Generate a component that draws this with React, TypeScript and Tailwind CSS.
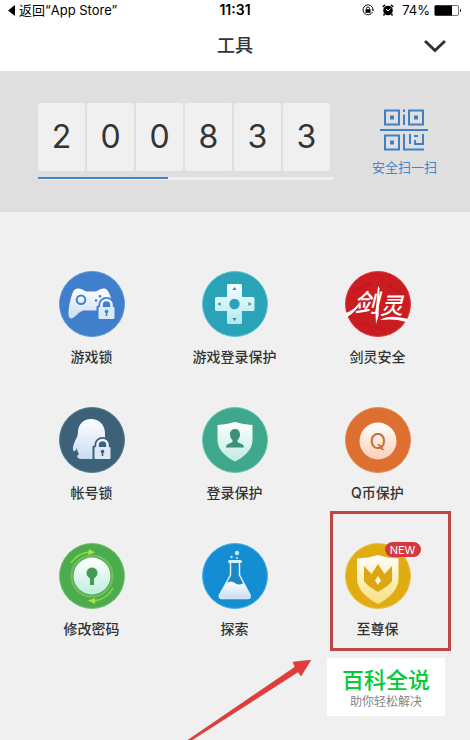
import type { ReactNode } from "react";

function LockBadge({ x, y, stroke }: { x: number; y: number; stroke: string }) {
  return (
    <g transform={`translate(${x} ${y})`}>
      <path
        d="M0 9H2V7A6.500 6.500 0 0 1 15 7V9H17V21H0Z"
        fill={stroke}
        stroke={stroke}
        strokeWidth="3"
        strokeLinejoin="round"
      />
      <path d="M3.500 10V7A5 5 0 0 1 13.500 7V10" fill="none" stroke="#eef5fc" strokeWidth="2.500" />
      <rect x="0.500" y="9" width="16" height="12" rx="1" fill="#dce9f6" />
      <circle cx="8.500" cy="13.500" r="1.800" fill={stroke} />
      <path d="M8.500 14V18" stroke={stroke} strokeWidth="1.600" />
    </g>
  );
}

function Disc({ fill, edge, children }: { fill: string; edge: string; children: ReactNode }) {
  return (
    <svg viewBox="0 0 66 66" className="size-[66px]" aria-hidden="true">
      <defs>
        <linearGradient id="pale" x1="0" y1="0" x2="0" y2="1">
          <stop offset="0" stopColor="#ffffff" />
          <stop offset="1" stopColor="#c9dcf0" />
        </linearGradient>
        <linearGradient id="mint" x1="0" y1="0" x2="0" y2="1">
          <stop offset="0" stopColor="#ffffff" />
          <stop offset="1" stopColor="#c0ecdf" />
        </linearGradient>
        <linearGradient id="aqua" x1="0" y1="0" x2="0" y2="1">
          <stop offset="0" stopColor="#f4ffff" />
          <stop offset="1" stopColor="#b4e6ee" />
        </linearGradient>
        <linearGradient id="peach" x1="0" y1="0" x2="0" y2="1">
          <stop offset="0" stopColor="#ffffff" />
          <stop offset="1" stopColor="#f9cfb4" />
        </linearGradient>
        <linearGradient id="cream" x1="0" y1="0" x2="0" y2="1">
          <stop offset="0" stopColor="#ffffff" />
          <stop offset="1" stopColor="#f8e07c" />
        </linearGradient>
      </defs>
      <circle cx="33" cy="33" r="32.500" fill={fill} stroke={edge} />
      {children}
    </svg>
  );
}

const GameLockIcon = () => (
  <Disc fill="#3f7fcb" edge="#5a96da">
    <path
      d="M17 18C20 17 23 18 26 20Q27 20.500 29 20.500H35Q37 20.500 38 20C41 18 44 17 47 18C50 20 52 26 54 34V48H47C44 44 42 40 39 39.500H25C21 40 18 44 14 47C11 48.500 9 46 9.500 41C10 34 12 25 14.500 20Q15.500 18.500 17 18Z"
      fill="url(#pale)"
    />
    <circle cx="22" cy="28.700" r="4.300" fill="none" stroke="#3f7fcb" strokeWidth="2" />
    <g fill="#3f7fcb">
      <circle cx="41" cy="25.300" r="1.300" />
      <circle cx="37" cy="29.500" r="1.300" />
      <circle cx="45" cy="28" r="1.300" />
    </g>
    <LockBadge x={39} y={27} stroke="#3f7fcb" />
  </Disc>
);

const PadIcon = () => (
  <Disc fill="#2aa3b8" edge="#58c4d3">
    <path
      d="M26.500 13H38.500Q40 13 40 14.500V26H51Q52.500 26 52.500 27.500V38.500Q52.500 40 51 40H40V51.500Q40 53 38.500 53H26.500Q25 53 25 51.500V40H14.500Q13 40 13 38.500V27.500Q13 26 14.500 26H25V14.500Q25 13 26.500 13Z"
      fill="url(#aqua)"
    />
    <circle cx="32.500" cy="33" r="5.200" fill="#2aa3b8" />
    <path
      d="M32.500 16L34.500 19H30.500ZM32.500 50L34.500 47H30.500ZM15.500 33L18.500 31V35ZM49.500 33L46.500 31V35Z"
      fill="#2a8fa1"
    />
  </Disc>
);

const BladeIcon = () => (
  <Disc fill="#cb1c22" edge="#dc3c3c">
    <path d="M8 20L26 12M16 52L40 60M42 14L56 22" stroke="#b5151b" strokeWidth="2" opacity="0.500" />
    <path d="M0 42C6 41 11 36 16 30C14 36 9 42 2 46Z" fill="#fff" />
    <path d="M35 49C43 44 53 46 63 48L61 51C52 48 44 48 35 49Z" fill="#fff" />
    <g fill="#fff" className="font-['Noto_Sans_CJK_SC',sans-serif] font-medium italic">
      <text x="9" y="41" fontSize="25">剑</text>
      <text x="35" y="43" fontSize="23">灵</text>
    </g>
    <path d="M33 15L34.500 17L33.500 45L31 53L30.500 43Z" fill="#fff" />
  </Disc>
);

const PenguinIcon = () => (
  <Disc fill="#3c6179" edge="#587d94">
    <path
      d="M32 12C24 12 19 18 19 25C19 28 18 30 17 32C15 36 13 41 14.500 44C15.500 45 17 43 18 41C18 44 19 45 20 47C17 49 18 51.500 22 52H40L46 40V26C46 18 40 12 32 12Z"
      fill="url(#pale)"
    />
    <LockBadge x={35} y={31} stroke="#3c6179" />
  </Disc>
);

const LoginShieldIcon = () => (
  <Disc fill="#3fa88c" edge="#68c6ad">
    <path d="M15.500 18Q25 17.500 33 15Q41 17.500 50.500 18V33C50.500 43 42 50 33 54.500C24 50 15.500 43 15.500 33Z" fill="url(#mint)" />
    <path
      d="M33 22C29.500 22 28 24.500 28 27.500C28 30 29 32 30.500 33V35C28 36.500 24 37 24 40.500H42C42 37 38 36.500 35.500 35V33C37 32 38 30 38 27.500C38 24.500 36.500 22 33 22Z"
      fill="#3a9079"
    />
  </Disc>
);

const CoinIcon = () => (
  <Disc fill="#dd6f31" edge="#e58b56">
    <circle cx="33" cy="34" r="18.500" fill="url(#peach)" />
    <text x="33" y="42" fontSize="22" textAnchor="middle" fill="#c5703f" className="font-['Inter',sans-serif] font-normal">
      Q
    </text>
  </Disc>
);

const PasswordIcon = () => (
  <Disc fill="#4cab4c" edge="#70c570">
    <circle cx="33" cy="33" r="20.500" fill="none" stroke="#70c062" strokeWidth="2" />
    <circle cx="33" cy="33" r="18.500" fill="url(#mint)" />
    <circle cx="33" cy="30" r="5.500" fill="#459b55" />
    <path d="M33 33V42" stroke="#459b55" strokeWidth="4" />
    <g fill="none" stroke="#8fdc40" strokeWidth="1.500">
      <path d="M12 20A25 25 0 0 1 31 9" />
      <path d="M54 45A25 25 0 0 1 35 58" />
    </g>
    <path d="M30 6L36 9.500L29 12ZM36 55L29 57.500L36 61Z" fill="#a2e83d" />
  </Disc>
);

const FlaskIcon = () => (
  <Disc fill="#148dd2" edge="#47b0ea">
    <path d="M28.500 19V32L17.500 52Q16.500 55.500 20 55.500H45.500Q49 55.500 48 52L37.500 32V19" fill="#1d86c4" stroke="#d4f1ff" strokeWidth="1.500" />
    <path d="M24.500 40Q29 37 33 40T41.500 40L48 52Q49 55.500 45.500 55.500H20Q16.500 55.500 17.500 52Z" fill="url(#pale)" />
    <rect x="26" y="17" width="14" height="3" rx="1.500" fill="#d4f1ff" />
    <circle cx="35" cy="10" r="2.200" fill="#c2ebff" />
    <circle cx="29.500" cy="14" r="1.200" fill="#c2ebff" />
    <circle cx="35" cy="15" r="1" fill="#c2ebff" />
  </Disc>
);

const CrownShieldIcon = () => (
  <Disc fill="#e1ab12" edge="#e9bf46">
    <path d="M12 15.500Q24 15 33 12Q42 15 53.500 15.500V36C53.500 47 43 56 33 61C23 56 12 47 12 36Z" fill="url(#cream)" />
    <path d="M19 23L26.500 31L33 21L39.500 31L47 23V38Q45 42 33 49Q21 42 19 38Z" fill="#dfa614" />
    <path d="M33 33L36 37.500L33 42L30 37.500Z" fill="#fff8dc" />
  </Disc>
);

const tools = [
  { label: "游戏锁", Icon: GameLockIcon },
  { label: "游戏登录保护", Icon: PadIcon },
  { label: "剑灵安全", Icon: BladeIcon },
  { label: "帐号锁", Icon: PenguinIcon },
  { label: "登录保护", Icon: LoginShieldIcon },
  { label: "Q币保护", Icon: CoinIcon },
  { label: "修改密码", Icon: PasswordIcon },
  { label: "探索", Icon: FlaskIcon },
  { label: "至尊保", Icon: CrownShieldIcon, isNew: true },
];

function StatusBar() {
  return (
    <div className="grid h-5 grid-cols-3 items-center pr-2 pl-2 text-sm text-black">
      <a href="#app-store" className="flex items-center gap-1 whitespace-nowrap">
        <svg viewBox="0 0 7 11" className="h-[11px] w-[7px]" aria-hidden="true">
          <path d="M7 0V11L0 5.500Z" />
        </svg>
        <span className="text-[13px]">返回“App Store”</span>
      </a>
      <time className="text-center font-semibold">11:31</time>
      <div className="flex items-center justify-end gap-2">
        <svg viewBox="0 0 12 12" className="size-3" aria-hidden="true">
          <path d="M10.500 8A5 5 0 1 1 11 5.500" fill="none" stroke="#111" />
          <path d="M9.500 5.500H12L11 7.500Z" />
          <rect x="3.500" y="5.200" width="5" height="3.600" />
          <path d="M4.500 5.500V4.500A1.500 1.500 0 0 1 7.500 4.500V5.500" fill="none" stroke="#111" />
        </svg>
        <svg viewBox="0 0 12 12" className="size-3" aria-hidden="true">
          <circle cx="6" cy="6.500" r="4.800" />
          <path d="M0.800 3L3 0.900M11.200 3L9 0.900M2.500 10L1.500 11.500M9.500 10L10.500 11.500" stroke="#111" strokeWidth="1.600" />
          <path d="M4 5L6 7L8.500 4.500" fill="none" stroke="#fff" />
        </svg>
        <div className="flex items-center gap-1">
          <span className="text-[13px]">74%</span>
          <svg viewBox="0 0 28 11" className="h-[11px] w-7" aria-hidden="true">
            <rect x="0.500" y="0.500" width="24" height="10" rx="1.500" fill="#fff" stroke="#777" />
            <path d="M1 0.500H18V10.500H1Z" />
            <path d="M26 3.500Q28 5.500 26 7.500Z" />
          </svg>
        </div>
      </div>
    </div>
  );
}

function ScanIcon() {
  return (
    <svg viewBox="0 0 48 42" className="h-[42px] w-12" fill="none" stroke="#3f80c6" strokeWidth="2" aria-hidden="true">
      <path d="M5 1.500H19V15.500H5ZM29 1.500H43V15.500H29ZM5 26.500H19V40.500H5Z" />
      <path d="M0 21H48M24 0.500V3M24 5.500V16M24 25V40.500H44M30 25V35M34 27H38M43 25V35H35V31" />
      <path d="M10 8.500H14M34 8.500H38M10 33.500H14" strokeWidth="4" />
    </svg>
  );
}

export default function App() {
  return (
    <div className="flex min-h-screen flex-col overflow-hidden bg-[#f0f0f0] font-['Inter','Noto_Sans_CJK_SC',sans-serif] text-[#333]">
      <header className="bg-white">
        <StatusBar />
        <div className="grid h-[51px] grid-cols-3 items-center px-6">
          <h1 className="col-start-2 text-center text-lg font-medium">工具</h1>
          <button type="button" aria-label="展开" className="justify-self-end">
            <svg viewBox="0 0 22 14" className="h-3.5 w-[22px]" fill="none" stroke="#333" strokeWidth="3" aria-hidden="true">
              <path d="M1 2L11 11.500L21 2" />
            </svg>
          </button>
        </div>
      </header>

      <section className="flex items-start justify-between bg-[#dfdfdf] pt-8 pr-[33px] pb-8 pl-[38px]">
        <div className="mr-[38px] flex-1">
          <div className="mr-1 grid grid-cols-6 gap-0.5">
            {[2, 0, 0, 8, 3, 3].map((digit, i) => (
              <span key={i} className="flex h-[68px] items-center justify-center rounded-xs bg-[#f0f0f0] text-[32px]">
                {digit}
              </span>
            ))}
          </div>
          <div className="mt-1.5 h-[3px] bg-[#efefef]">
            <div className="h-0.5 w-[44%] bg-[#4483c9]" />
          </div>
        </div>
        <button type="button" className="flex flex-col items-center gap-1.5 pt-1.5 text-[13px] leading-5 text-[#4684c8]">
          <ScanIcon />
          安全扫一扫
        </button>
      </section>

      <main className="flex-1 pt-[59px] pr-[21px] pl-5">
        <ul className="grid grid-cols-3 gap-y-10">
          {tools.map(({ label, Icon, isNew }) => (
            <li key={label} className="relative flex justify-center">
              <button type="button" className="flex flex-col items-center gap-2.5 text-sm leading-5 font-medium">
                <span className="relative">
                  <Icon />
                  {isNew && (
                    <span className="absolute -top-px left-10 flex h-[15px] w-9 items-center justify-center rounded-full bg-[#d23a40] text-[11px] font-normal text-white">
                      NEW
                    </span>
                  )}
                </span>
                {label}
              </button>
              {isNew && (
                <>
                  <div className="pointer-events-none absolute -top-8 left-6 h-[140px] w-[121px] border-3 border-[#bd4646]" />
                  <svg viewBox="0 0 124 80" className="pointer-events-none absolute top-[117px] -left-[118px] h-20 w-[124px]" aria-hidden="true">
                    <path d="M0 80L107 7L105 2L123 0L113 16L110 12L4 80Z" fill="#e23b3b" stroke="#bb4444" strokeWidth="0.500" />
                  </svg>
                  <div className="absolute top-[115px] left-[21px] flex h-[58px] w-[118px] flex-col items-center justify-center bg-white pt-0.5">
                    <strong className="text-[22px] leading-7 font-medium text-[#08c936]">百科全说</strong>
                    <span className="text-xs leading-4 text-[#858585]">助你轻松解决</span>
                  </div>
                </>
              )}
            </li>
          ))}
        </ul>
      </main>
    </div>
  );
}
